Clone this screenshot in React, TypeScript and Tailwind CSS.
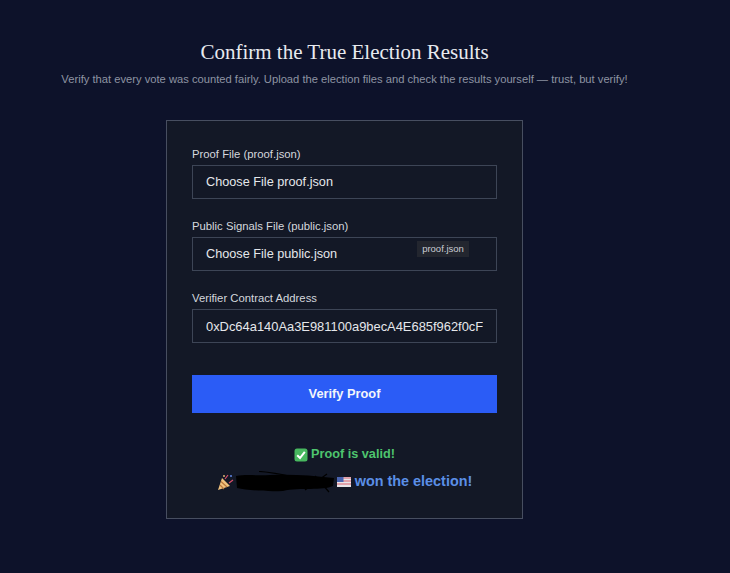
export default function App() {
  const label = "block text-[11.3px] leading-[14px] text-[#d4d7dd] mb-[4px]";
  const base = "block w-full h-[34px] border border-[#3d4556] bg-[#131826] px-[13px] leading-[32px] text-[#e5e7eb] outline-none";
  const box = base + " text-[12.7px]";
  return (
    <div className="w-[730px] h-[573px] overflow-hidden bg-[#0d122a]">
      <div className="w-[689px] flex flex-col items-center font-['Liberation_Sans',Arial,sans-serif]">
        <h1 className="mt-[40px] h-[25px] text-[21px] leading-[25px] text-[#e8eaef] font-['Liberation_Serif',serif]">Confirm the True Election Results</h1>
        <p className="mt-[4px] h-[20px] text-[11.2px] leading-[20px] text-[#8e94a3] whitespace-nowrap">Verify that every vote was counted fairly. Upload the election files and check the results yourself — trust, but verify!</p>
        <div className="mt-[31px] w-[357px] h-[399px] border border-[#474e60] bg-[#131826] px-[25px] pt-[26px]">
          <label className={label}>Proof File (proof.json)</label>
          <div className={box}>Choose File proof.json</div>
          <label className={label + " mt-[20px]"}>Public Signals File (public.json)</label>
          <div className={box + " relative"}>
            Choose File public.json
            <span className="absolute left-[224px] top-[3px] h-[16px] w-[52px] bg-[#23262f] text-center text-[9.5px] leading-[16px] text-[#c9ccd3]">proof.json</span>
          </div>
          <label className={label + " mt-[20px]"}>Verifier Contract Address</label>
          <input readOnly className={base + " text-[12.9px]"} value="0xDc64a140Aa3E981100a9becA4E685f962f0cF6C9" />
          <button className="mt-[32px] block w-full h-[38px] bg-[#2b5cf6] text-[12.8px] font-bold text-[#f3f5fb]">Verify Proof</button>
          <div className="mt-[33px] flex items-center justify-center gap-[3px] h-[18px] text-[12.7px] font-bold text-[#4ec46e]">
            <svg width="14" height="14" viewBox="0 0 14 14"><rect x="0.5" y="0.5" width="13" height="13" rx="2.5" fill="#48b85f" /><path d="M3.2 7.2 L6 10 L10.8 3.8" fill="none" stroke="#fff" strokeWidth="2" /></svg>
            <span>Proof is valid!</span>
          </div>
          <div className="mt-[8px] flex items-center justify-center h-[20px] text-[14.4px] font-bold text-[#5b8fe6]">
            <svg className="mr-[1px]" width="17" height="17" viewBox="0 0 17 17">
              <path d="M1 16 L5 4 L13 12 Z" fill="#f0c27e" />
              <path d="M3 11 L7 15 M4 7.5 L10 13" stroke="#b9763a" strokeWidth="1.2" />
              <path d="M8 5 L11 1 M12 9 L16 6" stroke="#d94f6a" strokeWidth="1.2" />
              <circle cx="14" cy="2" r="1.1" fill="#5b7fd6" />
              <circle cx="7" cy="2" r="0.9" fill="#f0c27e" />
            </svg>
            <svg className="mr-[2px]" width="100" height="22" viewBox="0 0 100 22">
              <path d="M1 5 C12 3 22 5 35 4 C55 3 75 4 99 7 L98 15 C88 20 65 16 48 20 C30 21 12 19 2 17 Z" fill="#000" />
              <path d="M24 0.5 C35 1 45 3 58 6 M80 5 L94 21 M70 19 L92 3" stroke="#000" strokeWidth="1.2" fill="none" />
            </svg>
            <svg className="mr-[4px]" width="14" height="10" viewBox="0 0 14 10">
              <rect width="14" height="10" fill="#e8e4e8" />
              <path d="M0 1 H14 M0 4 H14 M0 7 H14" stroke="#d9606c" strokeWidth="1.2" />
              <rect width="6.5" height="5" fill="#4a64b0" />
            </svg>
            <span>won the election!</span>
          </div>
        </div>
      </div>
    </div>
  );
}
